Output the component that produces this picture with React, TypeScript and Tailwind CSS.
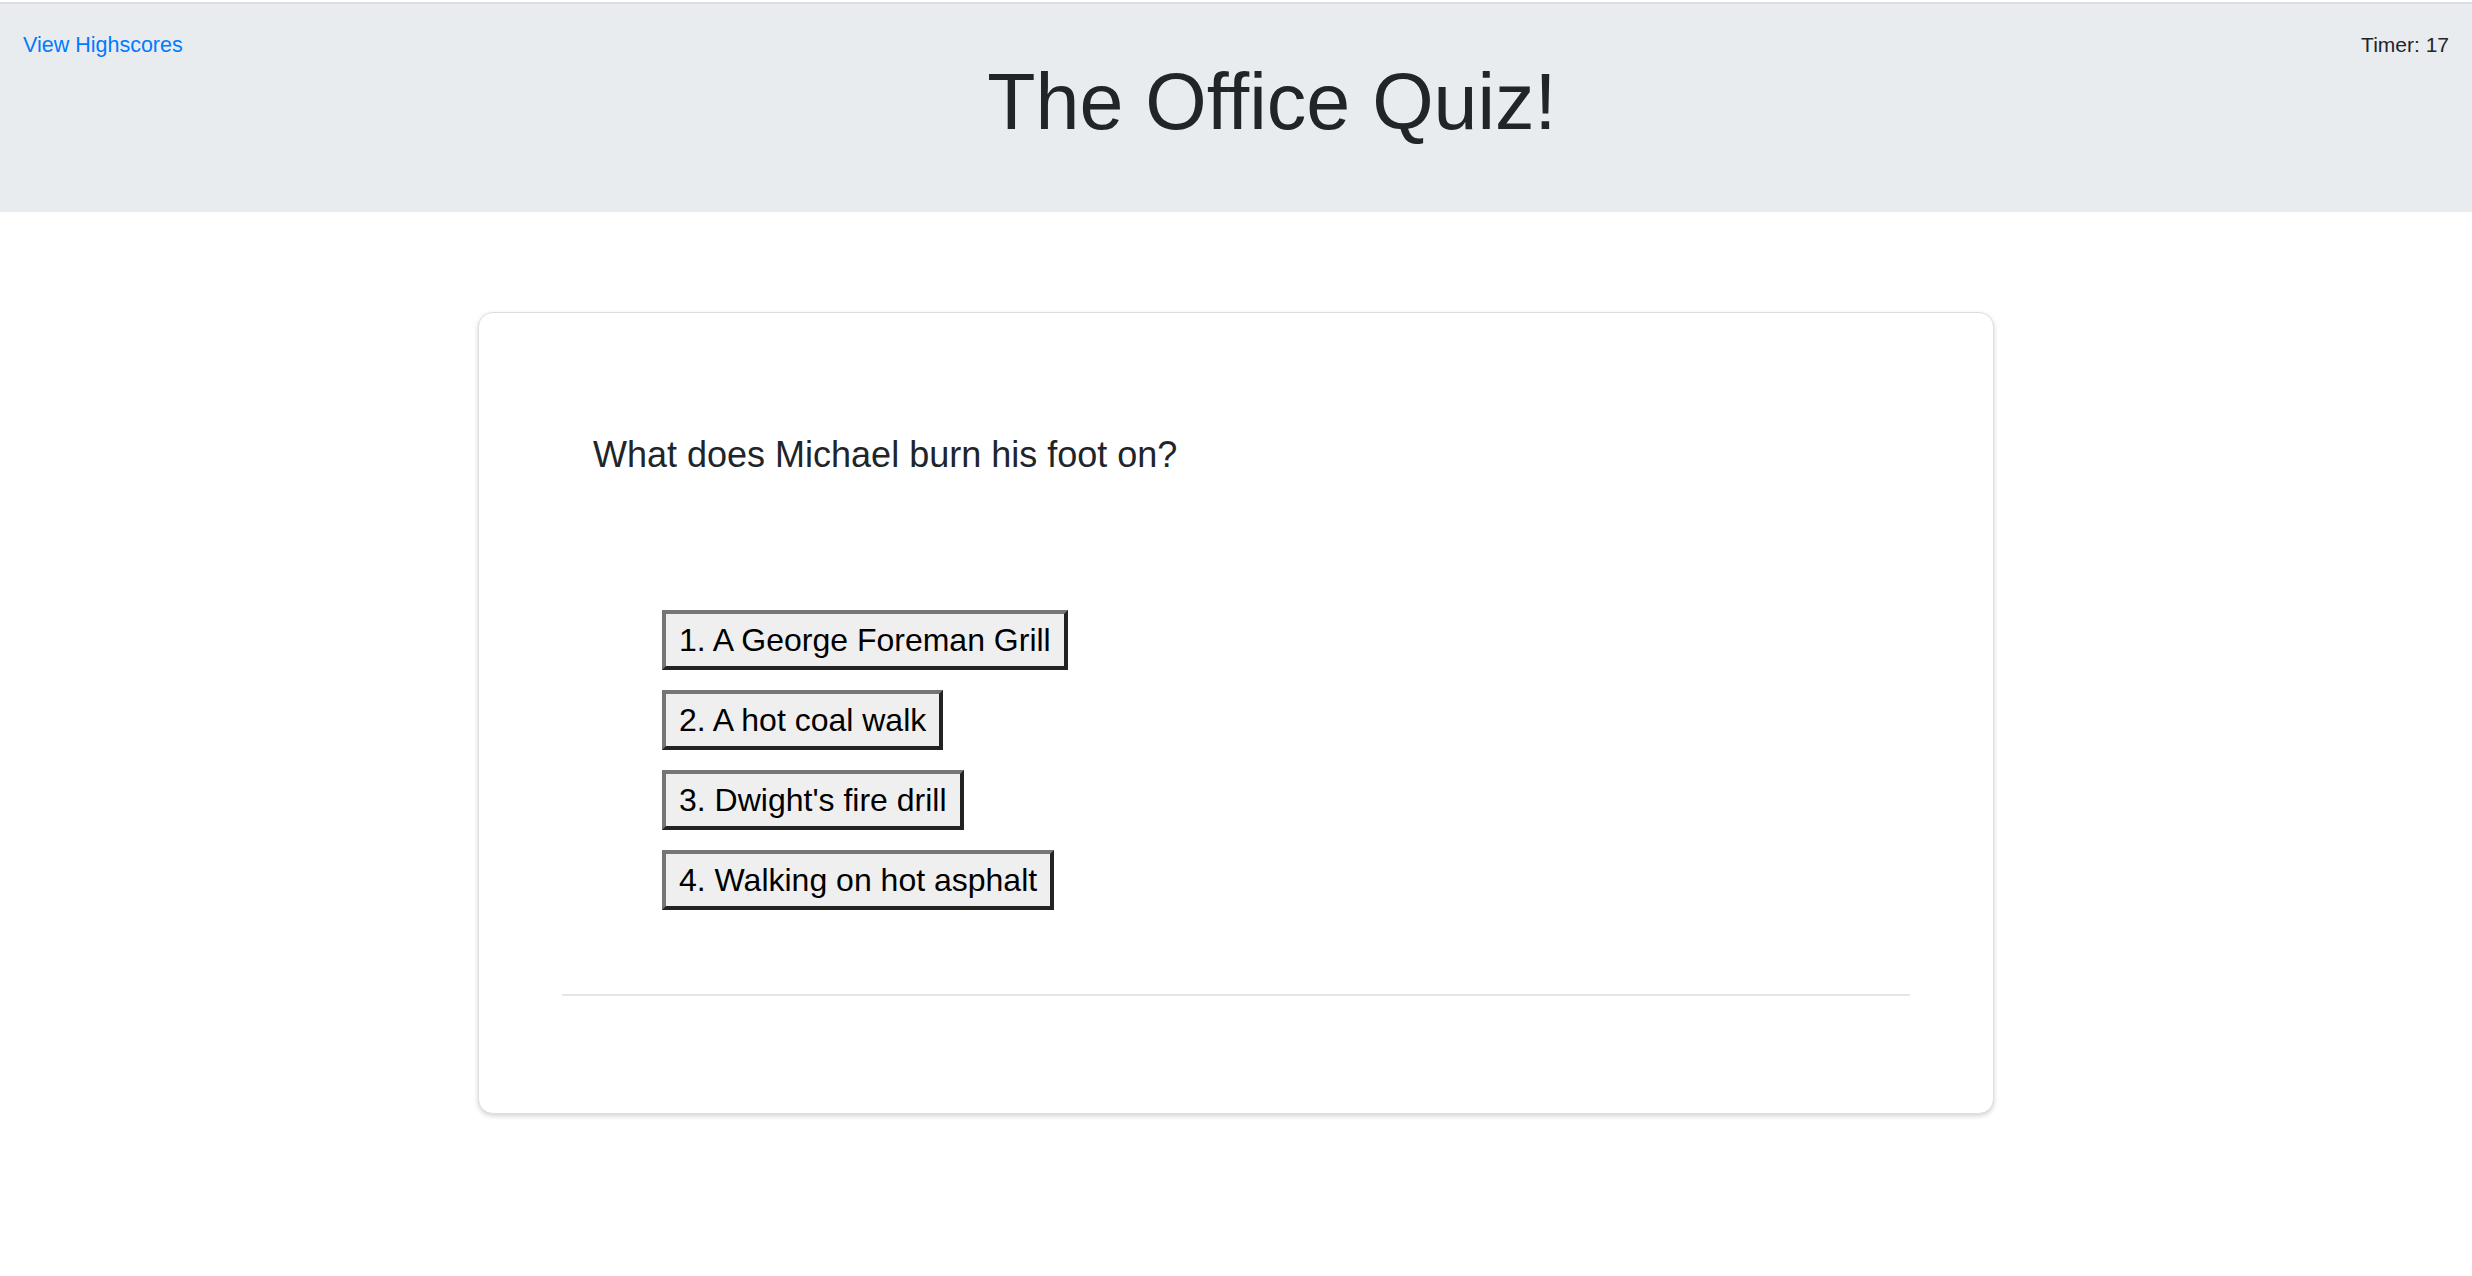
import React from "react";

const answers = [
  "1. A George Foreman Grill",
  "2. A hot coal walk",
  "3. Dwight's fire drill",
  "4. Walking on hot asphalt",
];

export default function App() {
  return (
    <div className="min-h-screen bg-white pt-[2px] font-['Liberation_Sans',Arial,sans-serif] text-[#212529]">
      {/* Header / jumbotron */}
      <header className="h-[210px] border-t-2 border-[#dcdee1] bg-[#e9ecef] px-[23px] pt-[25px]">
        <div className="flex items-start">
          <a href="#" className="text-[21.5px] leading-[1.5] text-[#007bff]">
            View Highscores
          </a>
          <h1 className="mt-[26px] flex-1 text-center text-[79px] font-normal leading-[1.2]">
            The Office Quiz!
          </h1>
          <div className="text-[21px] leading-[1.5]">Timer: 17</div>
        </div>
      </header>

      {/* Quiz card */}
      <main className="pt-[100px]">
        <div className="mx-auto w-[1516px] rounded-[15px] border border-[#dcdfe2] bg-white px-[83px] pt-[115px] pb-[117px] shadow-[0_2px_5px_rgba(0,0,0,0.18)]">
          <p className="ml-[31px] text-[36px] leading-[54px]">
            What does Michael burn his foot on?
          </p>

          <div className="mt-[128px] ml-[100px] flex flex-col items-start gap-[20px]">
            {answers.map((a) => (
              <button
                key={a}
                className="flex h-[60px] items-center border-4 border-t-[#767676] border-l-[#767676] border-r-[#222] border-b-[#222] bg-[#efefef] px-[13px] text-[32px] leading-none text-black"
              >
                {a}
              </button>
            ))}
          </div>

          <hr className="mt-[84px] h-[2px] border-0 bg-[#e5e5e5]" />
        </div>
      </main>
    </div>
  );
}
